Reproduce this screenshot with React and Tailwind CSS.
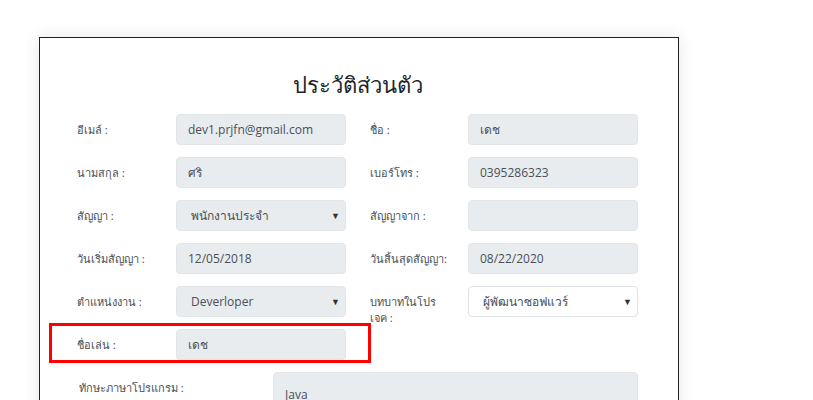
import React from 'react';

const latin = { fontFamily: '"Open Sans", "Noto Sans", sans-serif' };

function Field({ value, select, white }) {
  return (
    <div
      className={`w-[170px] h-[31px] rounded-[4px] border flex items-center justify-between ${
        white ? 'bg-white border-[#dfe2e6]' : 'bg-[#e9ecef] border-[#e3e6e9]'
      } ${select ? 'pl-[14px] pr-[5px]' : 'px-[11px]'}`}
    >
      <span className="text-[12px] text-[#495057] whitespace-nowrap" style={latin}>
        {value}
      </span>
      {select && <span className="text-[9px] text-[#333] leading-none">▼</span>}
    </div>
  );
}

function Label({ children, w = 'w-[99px]' }) {
  return (
    <div className={`${w} shrink-0 pt-[8px] text-[11px] leading-[16px] text-[#495057] whitespace-nowrap`}>
      {children}
    </div>
  );
}

function Row({ left, right }) {
  return (
    <div className="flex items-start h-[31px] mb-[12px]">
      <Label>{left.label}</Label>
      <Field {...left} />
      {right && (
        <>
          <div className="w-[24px] shrink-0" />
          <Label w="w-[98px]">{right.label}</Label>
          <Field {...right} />
        </>
      )}
    </div>
  );
}

export default function App() {
  return (
    <div className="bg-white min-h-[400px] pl-[39px] pt-[37px] overflow-hidden" style={{ fontFamily: '"Noto Sans", sans-serif' }}>
      <div className="w-[640px] h-[420px] border border-[#222] bg-white shadow-[0_0_16px_rgba(0,0,0,0.10)] pl-[37px] pr-[40px]">
        <h1 className="text-center text-[22px] leading-[36px] text-[#212529] pt-[28px] pb-[12px]">
          ประวัติส่วนตัว
        </h1>

        <Row left={{ label: 'อีเมล์ :', value: 'dev1.prjfn@gmail.com' }} right={{ label: 'ชื่อ :', value: 'เดช' }} />
        <Row left={{ label: 'นามสกุล :', value: 'ศริ' }} right={{ label: 'เบอร์โทร :', value: '0395286323' }} />
        <Row left={{ label: 'สัญญา :', value: 'พนักงานประจำ', select: true }} right={{ label: 'สัญญาจาก :', value: '' }} />
        <Row left={{ label: 'วันเริ่มสัญญา :', value: '12/05/2018' }} right={{ label: 'วันสิ้นสุดสัญญา:', value: '08/22/2020' }} />
        <Row
          left={{ label: 'ตำแหน่งงาน :', value: 'Deverloper', select: true }}
          right={{
            label: (
              <>
                บทบาทในโปร
                <br />
                เจค :
              </>
            ),
            value: 'ผู้พัฒนาซอฟแวร์',
            select: true,
            white: true,
          }}
        />
        <div className="relative">
          <Row left={{ label: 'ชื่อเล่น :', value: 'เดช' }} />
          <div className="absolute left-[-28px] top-[-6px] w-[322px] h-[40px] border-[3px] border-[#ff0000] pointer-events-none" />
        </div>

        <div className="flex items-start h-[31px]">
          <div className="w-[196px] shrink-0 pt-[8px] pl-[2px] text-[11px] leading-[16px] text-[#495057] whitespace-nowrap">
            ทักษะภาษาโปรแกรม :
          </div>
          <div className="flex-1 h-[40px] rounded-[4px] bg-[#e9ecef] border border-[#e3e6e9] px-[11px] pt-[8px]">
            <span className="text-[12px] text-[#495057]" style={latin}>
              Java
            </span>
          </div>
        </div>
      </div>
    </div>
  );
}
